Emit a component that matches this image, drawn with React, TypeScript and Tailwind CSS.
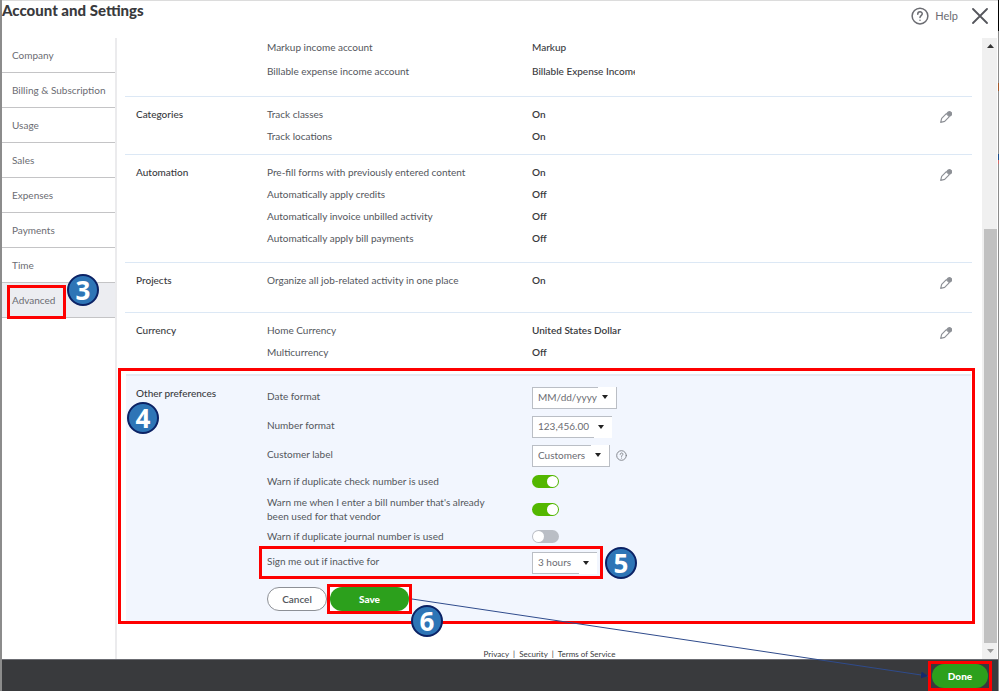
import type { ReactNode } from "react";
import clsx from "clsx";

const navItems = [
  "Company",
  "Billing & Subscription",
  "Usage",
  "Sales",
  "Expenses",
  "Payments",
  "Time",
  "Advanced",
];

const PencilIcon = () => (
  <svg viewBox="0 0 36 36" className="size-3" fill="none" stroke="#8d9096" strokeWidth="3.500" strokeLinejoin="round">
    <path d="M2 34 5 22 19 8l9 9-14 14z" />
    <path d="m22 6 3-3c3-2 6-1 8 1s3 5 1 8l-4 3z" fill="#8d9096" />
  </svg>
);

const HelpIcon = ({ className, strokeWidth }: { className?: string; strokeWidth: number }) => (
  <svg viewBox="0 0 24 24" className={className} fill="none" stroke="currentColor" strokeWidth={strokeWidth} strokeLinecap="round">
    <circle cx="12" cy="12" r="10.5" />
    <path d="M9 9.5c0-4 6-4 6-.5 0 2.500-3 2.500-3 5" />
    <path d="M12 17.500v.2" />
  </svg>
);

const Badge = ({ children, className }: { children: ReactNode; className?: string }) => (
  <span
    className={clsx(
      "absolute z-10 flex size-8 items-center justify-center rounded-full border-2 border-[#0b2265] bg-[#2e75b6]",
      "font-['Noto_Sans',sans-serif] text-[26px] leading-none font-bold text-white",
      className
    )}
  >
    {children}
  </span>
);

interface SectionProps {
  title: string;
  rows: string[][];
  className?: string;
}

const Section = ({ title, rows, className }: SectionProps) => (
  <section className={clsx("mr-2.5 ml-2 grid grid-cols-[131px_1fr_auto] pt-1.5 pr-5 pl-[11px]", className)}>
    <h2 className="leading-[22px] font-medium">{title}</h2>
    <dl>
      {rows.map(([label, value]) => (
        <div key={label} className="grid grid-cols-[265px_1fr] leading-[22px]">
          <dt className="text-[#53565c]">{label}</dt>
          <dd className="font-semibold">{value}</dd>
        </div>
      ))}
    </dl>
    <button type="button" aria-label={`Edit ${title}`} className="mt-2 h-3">
      <PencilIcon />
    </button>
  </section>
);

interface SelectProps {
  id: string;
  value: string;
  className: string;
  arrowClassName: string;
}

const Select = ({ id, value, className, arrowClassName }: SelectProps) => (
  <div className={clsx("relative h-[22px]", className)}>
    <select id={id} className="size-full appearance-none border border-[#babec5] bg-white pl-[5px] text-[#6b6c72]">
      <option>{value}</option>
    </select>
    <span className={clsx("pointer-events-none absolute flex w-[18px] items-center bg-white pl-1", arrowClassName)}>
      <svg viewBox="0 0 6 4" className="h-1 w-1.5" fill="#222">
        <path d="M0 0h6L3 4z" />
      </svg>
    </span>
  </div>
);

const Toggle = ({ id, checked }: { id: string; checked?: boolean }) => (
  <input
    id={id}
    type="checkbox"
    role="switch"
    defaultChecked={checked}
    className="relative h-[13px] w-[27px] appearance-none rounded-full bg-[#babec5] before:absolute before:top-px before:left-px before:size-[11px] before:rounded-full before:bg-white before:content-[''] checked:bg-[#53b700] checked:before:left-[15px]"
  />
);

interface FieldProps {
  id: string;
  label: string;
  className: string;
  labelClassName?: string;
  children: ReactNode;
}

const Field = ({ id, label, className, labelClassName, children }: FieldProps) => (
  <div className={clsx("grid grid-cols-[225px_1fr] items-center gap-x-10", className)}>
    <label htmlFor={id} className={clsx("leading-[14px] text-[#53565c]", labelClassName)}>
      {label}
    </label>
    <div className="flex items-center gap-1.5">{children}</div>
  </div>
);

const Preferences = () => (
  <section className="relative mr-[7px] ml-px border-[3px] border-[#fe0000] pt-[3px] pr-px pl-[5px]">
    <div className="grid grid-cols-[131px_1fr] border-t-2 border-[#e3ebf3] bg-[#f2f6fe] pt-[7px] pb-[7px] pl-2.5">
      <h2 className="leading-5 font-medium">Other preferences</h2>
      <div>
        <Field id="date" label="Date format" className="h-[29px]" labelClassName="pb-1">
          <Select id="date" value="MM/dd/yyyy" className="w-[85px]" arrowClassName="top-0 right-px h-[21px]" />
        </Field>
        <Field id="number" label="Number format" className="h-[29px]" labelClassName="pb-1">
          <Select id="number" value="123,456.00" className="w-20" arrowClassName="top-px right-0 h-[21px]" />
        </Field>
        <Field id="customer" label="Customer label" className="h-[29px]" labelClassName="pb-1">
          <Select id="customer" value="Customers" className="w-[78px]" arrowClassName="top-0 right-px h-[21px]" />
          <HelpIcon className="size-[11px] text-[#7d8087]" strokeWidth={2} />
        </Field>
        <Field id="check" label="Warn if duplicate check number is used" className="h-[22px]">
          <Toggle id="check" checked />
        </Field>
        <Field
          id="bill"
          label="Warn me when I enter a bill number that's already been used for that vendor"
          className="h-[34px]"
        >
          <Toggle id="bill" checked />
        </Field>
        <Field id="journal" label="Warn if duplicate journal number is used" className="h-5">
          <Toggle id="journal" />
        </Field>
        <div className="relative -ml-2 h-[33px] w-[344px] border-[3px] border-[#fe0000] pl-[5px]">
          <Field id="signout" label="Sign me out if inactive for" className="h-full" labelClassName="pb-1">
            <Select id="signout" value="3 hours" className="w-[65px]" arrowClassName="top-px right-0 h-[21px]" />
          </Field>
          <Badge className="-top-0.5 -right-[37px]">5</Badge>
        </div>
        <div className="mt-[5px] flex items-center">
          <button type="button" className="h-6 w-[60px] rounded-full border border-[#8d9096] bg-white font-semibold text-[#53565c]">
            Cancel
          </button>
          <div className="relative border-[3px] border-[#fe0000] bg-white">
            <button type="button" className="block h-6 w-[79px] rounded-full bg-[#2ca01c] font-black text-white">
              Save
            </button>
            <Badge className="-right-[34px] -bottom-[26px]">6</Badge>
          </div>
        </div>
      </div>
    </div>
    <Badge className="top-[31px] left-1.5">4</Badge>
  </section>
);

const ScrollBar = () => (
  <div aria-hidden="true" className="mr-px flex w-[15px] shrink-0 flex-col items-end bg-[#f0f0f0] pl-0.5">
    <svg viewBox="0 0 13 16" className="h-4 w-[13px]" fill="#333">
      <path d="M3 10 6.500 6 10 10z" />
    </svg>
    <div className="h-[175px]" />
    <div className="w-[13px] grow bg-[#c1c1c1]" />
    <svg viewBox="0 0 13 16" className="h-4 w-[13px]" fill="#999">
      <path d="M3 6h7l-3.500 4z" />
    </svg>
  </div>
);

export default function App() {
  return (
    <div className="relative flex min-h-screen flex-col border-r border-l-2 border-r-[#8c8c8c] border-l-[#8c8c8c] bg-white font-[Lato,sans-serif] text-[10px] text-[#393a3d]">
      <header className="flex h-[38px] items-start justify-between border-t border-[#dcdcdc]">
        <h1 className="text-[15px] leading-[18px] font-black">Account and Settings</h1>
        <div className="flex h-[30px] items-center gap-3.5 pr-2.5 text-[#6b6c72]">
          <a href="#help" className="flex items-center gap-1.5 text-[11px]">
            <HelpIcon className="size-[18px]" strokeWidth={2} />
            Help
          </a>
          <button type="button" aria-label="Close">
            <svg viewBox="0 0 16 16" className="size-4" stroke="#55565c" strokeWidth="1.800" strokeLinecap="round">
              <path d="m1 1 14 14M15 1 1 15" />
            </svg>
          </button>
        </div>
      </header>

      <div className="flex grow">
        <nav className="w-[115px] shrink-0 border-r-2 border-[#ebebed]">
          {navItems.map((item) => (
            <div
              key={item}
              className={clsx("relative h-[35px] border-b border-[#c4c4c6]", item === "Advanced" && "bg-[#ecedf1]")}
            >
              <a href="#settings" className="flex h-full items-center pl-2.5 text-[#6b6c72]">
                {item}
              </a>
              {item === "Advanced" && (
                <>
                  <span className="absolute top-0.5 left-[5px] h-[34px] w-[59px] border-[3px] border-[#fe0000]" />
                  <Badge className="-top-[9px] left-[65px]">3</Badge>
                </>
              )}
            </div>
          ))}
        </nav>

        <main className="flex min-w-0 grow flex-col">
          <div className="mr-2.5 ml-2 border-b border-[#dce8f5] pb-4 pl-[142px]">
            <div className="mb-1.5 grid grid-cols-[265px_1fr] leading-[18px]">
              <span className="text-[#53565c]">Markup income account</span>
              <span className="font-medium">Markup</span>
            </div>
            <div className="grid grid-cols-[265px_1fr] leading-[18px]">
              <span className="text-[#53565c]">Billable expense income account</span>
              <span className="w-[103px] overflow-hidden font-medium whitespace-nowrap">Billable Expense Income</span>
            </div>
          </div>
          <Section
            title="Categories"
            rows={[["Track classes", "On"], ["Track locations", "On"]]}
            className="border-b border-[#dce8f5] pb-[7px]"
          />
          <Section
            title="Automation"
            rows={[
              ["Pre-fill forms with previously entered content", "On"],
              ["Automatically apply credits", "Off"],
              ["Automatically invoice unbilled activity", "Off"],
              ["Automatically apply bill payments", "Off"],
            ]}
            className="border-b border-[#dce8f5] pb-[13px]"
          />
          <Section
            title="Projects"
            rows={[["Organize all job-related activity in one place", "On"]]}
            className="border-b border-[#dce8f5] pb-[21px]"
          />
          <Section
            title="Currency"
            rows={[["Home Currency", "United States Dollar"], ["Multicurrency", "Off"]]}
            className="pb-[5px]"
          />
          <Preferences />
          <div className="mt-auto flex justify-center gap-1 text-[8px] leading-[9px]">
            <a href="#privacy">Privacy</a>
            <span>|</span>
            <a href="#security">Security</a>
            <span>|</span>
            <a href="#terms">Terms of Service</a>
          </div>
        </main>
        <ScrollBar />
      </div>

      <footer className="flex h-8 items-end justify-end border-t border-[#6b6c72] bg-[#393a3d] pr-1.5">
        <div className="border-[3px] border-[#fe0000]">
          <button type="button" className="mx-px block h-6 w-14 rounded-full bg-[#2ca01c] font-black text-white">
            Done
          </button>
        </div>
      </footer>

      {/* connector from Save to Done */}
      <svg className="pointer-events-none absolute top-[599px] left-[410px] h-[77px] w-[calc(100%-480px)] overflow-visible">
        <defs>
          <marker id="head" viewBox="0 0 7 7" refX="7" refY="3.500" markerWidth="7" markerHeight="7" markerUnits="userSpaceOnUse" orient="auto">
            <path d="M0 0 7 3.500 0 7z" fill="#14296b" />
          </marker>
        </defs>
        <line x1="0" y1="0" x2="100%" y2="100%" stroke="#2f4b8c" strokeWidth="1" markerEnd="url(#head)" />
      </svg>

      {/* slivers of the window behind */}
      <span className="absolute top-0 -right-px h-[31px] w-px bg-black" />
      <span className="absolute top-[83px] -right-px h-2 w-px bg-[#a5592a]" />
      <span className="absolute top-[154px] -right-px h-1.5 w-px bg-[#1a4c8c]" />
      <span className="absolute top-[160px] -right-px h-1 w-px bg-[#d06a6a]" />
    </div>
  );
}
